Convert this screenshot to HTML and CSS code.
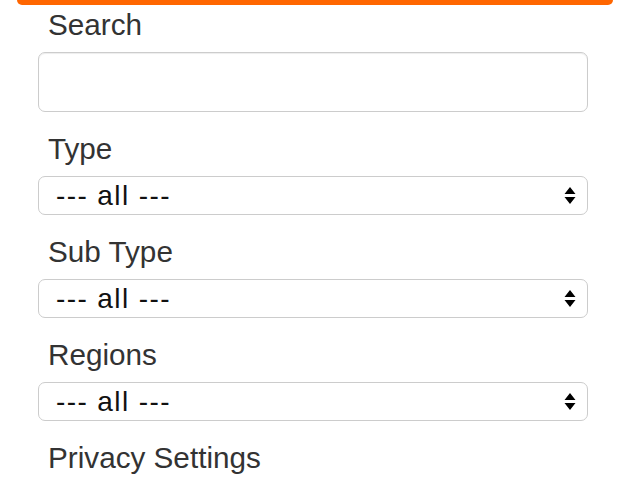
FILE: index.html
```html
<!DOCTYPE html>
<html lang="en">
<head>
  <meta charset="UTF-8">
  <meta name="viewport" content="width=device-width, initial-scale=1.0">
  <title>Filter</title>
  <link rel="stylesheet" href="styles.css">
</head>
<body>
  <div class="topbar"></div>
  <form class="filters">
    <div class="form-group first">
      <label for="search">Search</label>
      <input type="text" id="search" class="search-input">
    </div>
    <div class="form-group">
      <label for="type">Type</label>
      <div class="select-box">
        <select id="type"><option>--- all ---</option></select>
        <svg class="arrows" width="12" height="19" viewBox="0 0 12 19"><path d="M6 1 L11.5 8 L0.5 8 Z M0.5 11 L11.5 11 L6 18 Z" fill="#000"/></svg>
      </div>
    </div>
    <div class="form-group">
      <label for="subtype">Sub Type</label>
      <div class="select-box">
        <select id="subtype"><option>--- all ---</option></select>
        <svg class="arrows" width="12" height="19" viewBox="0 0 12 19"><path d="M6 1 L11.5 8 L0.5 8 Z M0.5 11 L11.5 11 L6 18 Z" fill="#000"/></svg>
      </div>
    </div>
    <div class="form-group">
      <label for="regions">Regions</label>
      <div class="select-box">
        <select id="regions"><option>--- all ---</option></select>
        <svg class="arrows" width="12" height="19" viewBox="0 0 12 19"><path d="M6 1 L11.5 8 L0.5 8 Z M0.5 11 L11.5 11 L6 18 Z" fill="#000"/></svg>
      </div>
    </div>
    <div class="form-group">
      <label>Privacy Settings</label>
    </div>
  </form>
</body>
</html>
```

FILE: styles.css
```css
/* Reset */
* {
  box-sizing: border-box;
  margin: 0;
  padding: 0;
}
body {
  background-color: #ffffff;
  color: #333;
  font-family: "Liberation Sans", Arial, sans-serif;
}
/* Orange strip at the top */
.topbar {
  height: 5px;
  margin: 0 27px 0 17px;
  background-color: #ff6600;
  border-radius: 0 0 5px 5px;
}
/* Form */
.filters {
  width: 550px;
  margin-left: 38px;
  padding-top: 3px;
}
.form-group {
  margin-top: 20px;
}
.form-group.first {
  margin-top: 0;
}
.form-group label {
  display: block;
  padding-left: 10px;
  font-size: 29.7px;
  line-height: 33px;
  color: #333;
}
.search-input {
  display: block;
  width: 100%;
  height: 60px;
  margin-top: 11px;
  border: 1px solid #ccc;
  border-radius: 7px;
  box-shadow: inset 0 1px 1px rgba(0, 0, 0, 0.075);
  font-size: 28px;
  padding: 0 14px;
}
.search-input:focus {
  outline: none;
}
/* Select */
.select-box {
  display: flex;
  align-items: center;
  height: 39px;
  margin-top: 11px;
  border: 1px solid #ccc;
  border-radius: 7px;
  background-color: #fff;
  padding-right: 11px;
}
.select-box select {
  flex: 1;
  height: 100%;
  border: none;
  background: transparent;
  -webkit-appearance: none;
  appearance: none;
  font-family: "Liberation Sans", Arial, sans-serif;
  font-size: 28px;
  letter-spacing: 1.4px;
  color: #111;
  padding-left: 17px;
}
.select-box select:focus {
  outline: none;
}
.arrows {
  flex: none;
}
```
